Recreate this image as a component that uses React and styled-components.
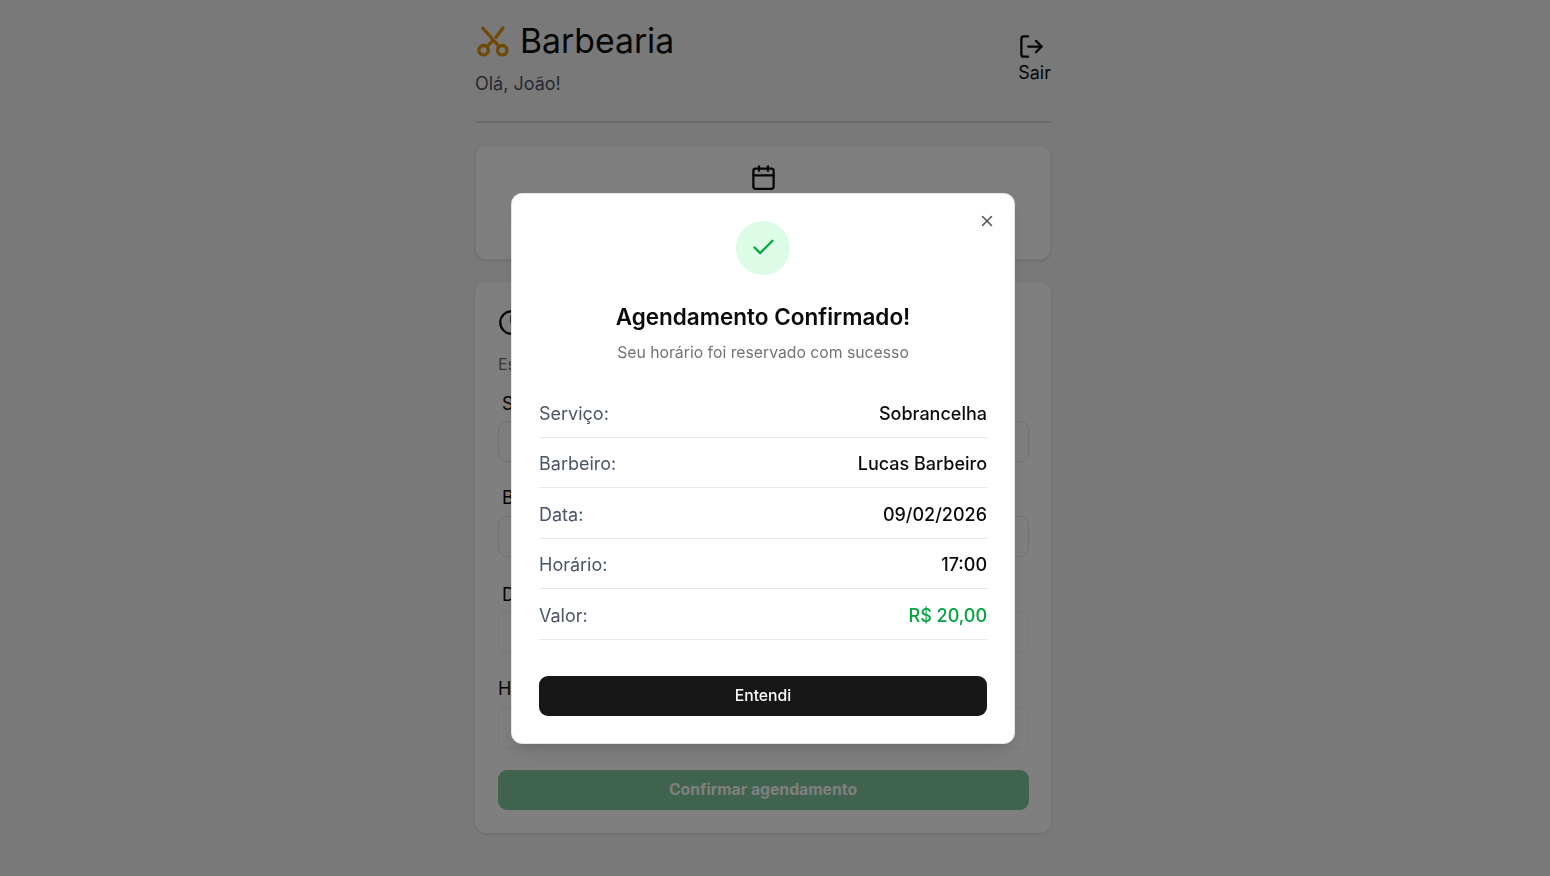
import React from 'react'
import styled, { createGlobalStyle } from 'styled-components'
import { Calendar, Check, Clock, LogOut, X } from 'lucide-react'

const GlobalStyle = createGlobalStyle`
  * {
    box-sizing: border-box;
  }
  body {
    margin: 0;
    background: #f3f3f3;
    font-family: Inter, 'Liberation Sans', sans-serif;
    font-size: 18px;
    line-height: 27px;
    color: #0a0a0a;
    overflow: hidden;
  }
  button {
    font-family: inherit;
    border: none;
    cursor: pointer;
  }
  svg {
    display: block;
    flex-shrink: 0;
  }
`
const Page = styled.div`
  height: 876px;
  padding: 18px 24px 0 0;
  overflow: hidden;
`
const Container = styled.div`
  width: 576px;
  margin: 0 auto;
`
const Header = styled.header`
  display: flex;
  justify-content: space-between;
  height: 105px;
  border-bottom: 2px solid #d9d9df;
`
const Brand = styled.h1`
  display: flex;
  align-items: center;
  gap: 9px;
  height: 45px;
  margin: 0 0 7px;
  font-size: 33.75px;
  font-weight: 400;
`
const BrandIcon = styled.svg`
  width: 36px;
  height: 36px;
  fill: none;
  stroke: #e0900f;
  stroke-width: 3.3;
  stroke-linecap: round;
`
const Greeting = styled.p`
  margin: 0;
  color: #4a5565;
`
const Logout = styled.button`
  display: flex;
  flex-direction: column;
  align-items: flex-start;
  padding: 15px 0 0;
  background: none;
  font-size: 18px;
  line-height: 26px;
  color: #0a0a0a;
`
const Card = styled.section`
  background: white;
  border-radius: 11px;
  box-shadow: 0 1px 3px rgba(0, 0, 0, 0.1), 0 1px 2px -1px rgba(0, 0, 0, 0.1);
`
const ShortcutCard = styled(Card)`
  display: flex;
  flex-direction: column;
  align-items: center;
  gap: 9px;
  height: 115px;
  margin-top: 22px;
  padding-top: 18px;
  border: 1px solid #ededee;
`
const BookingCard = styled(Card)`
  height: 551px;
  margin-top: 22px;
  padding: 27px 22px 0 23px;
`
const CardTitle = styled.h2`
  display: flex;
  align-items: center;
  gap: 9px;
  margin: 0;
  font-size: 22px;
  font-weight: 500;
`
const CardText = styled.p`
  margin: 15px 0 12px;
  font-size: 15.75px;
  color: #737373;
`
const Field = styled.div`
  display: flex;
  flex-direction: column;
  gap: ${({ $gap }) => $gap}px;
  height: ${({ $height }) => $height}px;
`
const Label = styled.label`
  padding-left: ${({ $indent }) => ($indent ? 4 : 0)}px;
  line-height: 27px;
`
const Select = styled.div`
  height: 41px;
  border: 1px solid #e5e5e5;
  border-radius: 9px;
  opacity: ${({ $disabled }) => ($disabled ? 0.5 : 1)};
`
const ConfirmButton = styled.button`
  display: block;
  width: 100%;
  height: 40px;
  padding: 0 1px 1px 0;
  border-radius: 9px;
  background: #80c69e;
  color: white;
  font-size: 15.75px;
  font-weight: 700;
`
const Overlay = styled.div`
  position: fixed;
  inset: 0;
  display: flex;
  justify-content: center;
  align-items: flex-start;
  padding: 193px 24px 0 0;
  background: rgba(0, 0, 0, 0.5);
`
const Modal = styled.div`
  position: relative;
  display: flex;
  flex-direction: column;
  align-items: center;
  width: 504px;
  height: 551px;
  padding: 27px;
  background: white;
  border: 1px solid #e5e5e5;
  border-radius: 11px;
  box-shadow: 0 11px 17px -3px rgba(0, 0, 0, 0.1), 0 4px 7px -4px rgba(0, 0, 0, 0.1);
`
const CloseButton = styled.button`
  position: absolute;
  top: 18px;
  right: 18px;
  padding: 0;
  background: none;
  color: #0a0a0a;
  opacity: 0.7;
`
const SuccessBadge = styled.div`
  display: grid;
  place-items: center;
  width: 54px;
  height: 54px;
  border-radius: 50%;
  background: #dcfce7;
  color: #00a63e;
`
const ModalTitle = styled.h2`
  margin: 28px 0 0;
  font-size: 22.5px;
  font-weight: 600;
  line-height: 27px;
`
const ModalText = styled.p`
  margin: 11px 0 0;
  font-size: 15.75px;
  line-height: 23px;
  color: #737373;
`
const Details = styled.dl`
  display: flex;
  flex-direction: column;
  gap: 12.5px;
  width: 100%;
  margin: 36px 0 36.4px;
`
const DetailRow = styled.div`
  display: flex;
  justify-content: space-between;
  height: 38px;
  border-bottom: 1px solid #e5e7eb;
`
const Term = styled.dt`
  color: #4a5565;
`
const Value = styled.dd`
  margin: 0;
  font-weight: 500;
  color: ${({ $highlight }) => ($highlight ? '#00a63e' : '#0a0a0a')};
`
const PrimaryButton = styled.button`
  width: 100%;
  height: 40px;
  padding: 0 0 2px;
  border-radius: 9px;
  background: #171717;
  color: #fafafa;
  font-size: 15.75px;
  font-weight: 500;
`

const fields = [
  { label: 'Serviço', height: 94, gap: 4, indent: true },
  { label: 'Barbeiro', height: 97, gap: 5, indent: true },
  { label: 'Data', height: 93.5, gap: 4, indent: true, disabled: true },
  { label: 'Horário', height: 95.5, gap: 5, disabled: true }
]

const details = [
  { term: 'Serviço:', value: 'Sobrancelha' },
  { term: 'Barbeiro:', value: 'Lucas Barbeiro' },
  { term: 'Data:', value: '09/02/2026' },
  { term: 'Horário:', value: '17:00' },
  { term: 'Valor:', value: 'R$ 20,00', highlight: true }
]

const ScissorsIcon = () => (
  <BrandIcon viewBox="0 0 36 36">
    <circle cx="8.6" cy="27.2" r="4.7" />
    <circle cx="27.2" cy="27.2" r="4.7" />
    <path d="M7.8 5 24 23.4" />
    <path d="M28 5 21 14.2" />
    <path d="M17.4 18.2 11.8 23.6" />
  </BrandIcon>
)

const BookingPage = () => (
  <Page>
    <Container>
      <Header>
        <div>
          <Brand>
            <ScissorsIcon />
            Barbearia
          </Brand>
          <Greeting>Olá, João!</Greeting>
        </div>
        <Logout>
          <LogOut size={27} />
          Sair
        </Logout>
      </Header>
      <ShortcutCard>
        <Calendar size={27} />
      </ShortcutCard>
      <BookingCard>
        <CardTitle>
          <Clock size={27} />
        </CardTitle>
        <CardText>Escolha</CardText>
        {fields.map(({ label, height, gap, indent, disabled }) => (
          <Field key={label} $height={height} $gap={gap}>
            <Label $indent={indent}>{label}</Label>
            <Select $disabled={disabled} />
          </Field>
        ))}
        <ConfirmButton>Confirmar agendamento</ConfirmButton>
      </BookingCard>
    </Container>
  </Page>
)

const ConfirmationModal = () => (
  <Overlay>
    <Modal role="dialog">
      <CloseButton aria-label="Fechar">
        <X size={18} />
      </CloseButton>
      <SuccessBadge>
        <Check size={27} />
      </SuccessBadge>
      <ModalTitle>Agendamento Confirmado!</ModalTitle>
      <ModalText>Seu horário foi reservado com sucesso</ModalText>
      <Details>
        {details.map(({ term, value, highlight }) => (
          <DetailRow key={term}>
            <Term>{term}</Term>
            <Value $highlight={highlight}>{value}</Value>
          </DetailRow>
        ))}
      </Details>
      <PrimaryButton>Entendi</PrimaryButton>
    </Modal>
  </Overlay>
)

export default () => {
  return (
    <>
      <GlobalStyle />
      <BookingPage />
      <ConfirmationModal />
    </>
  )
}
